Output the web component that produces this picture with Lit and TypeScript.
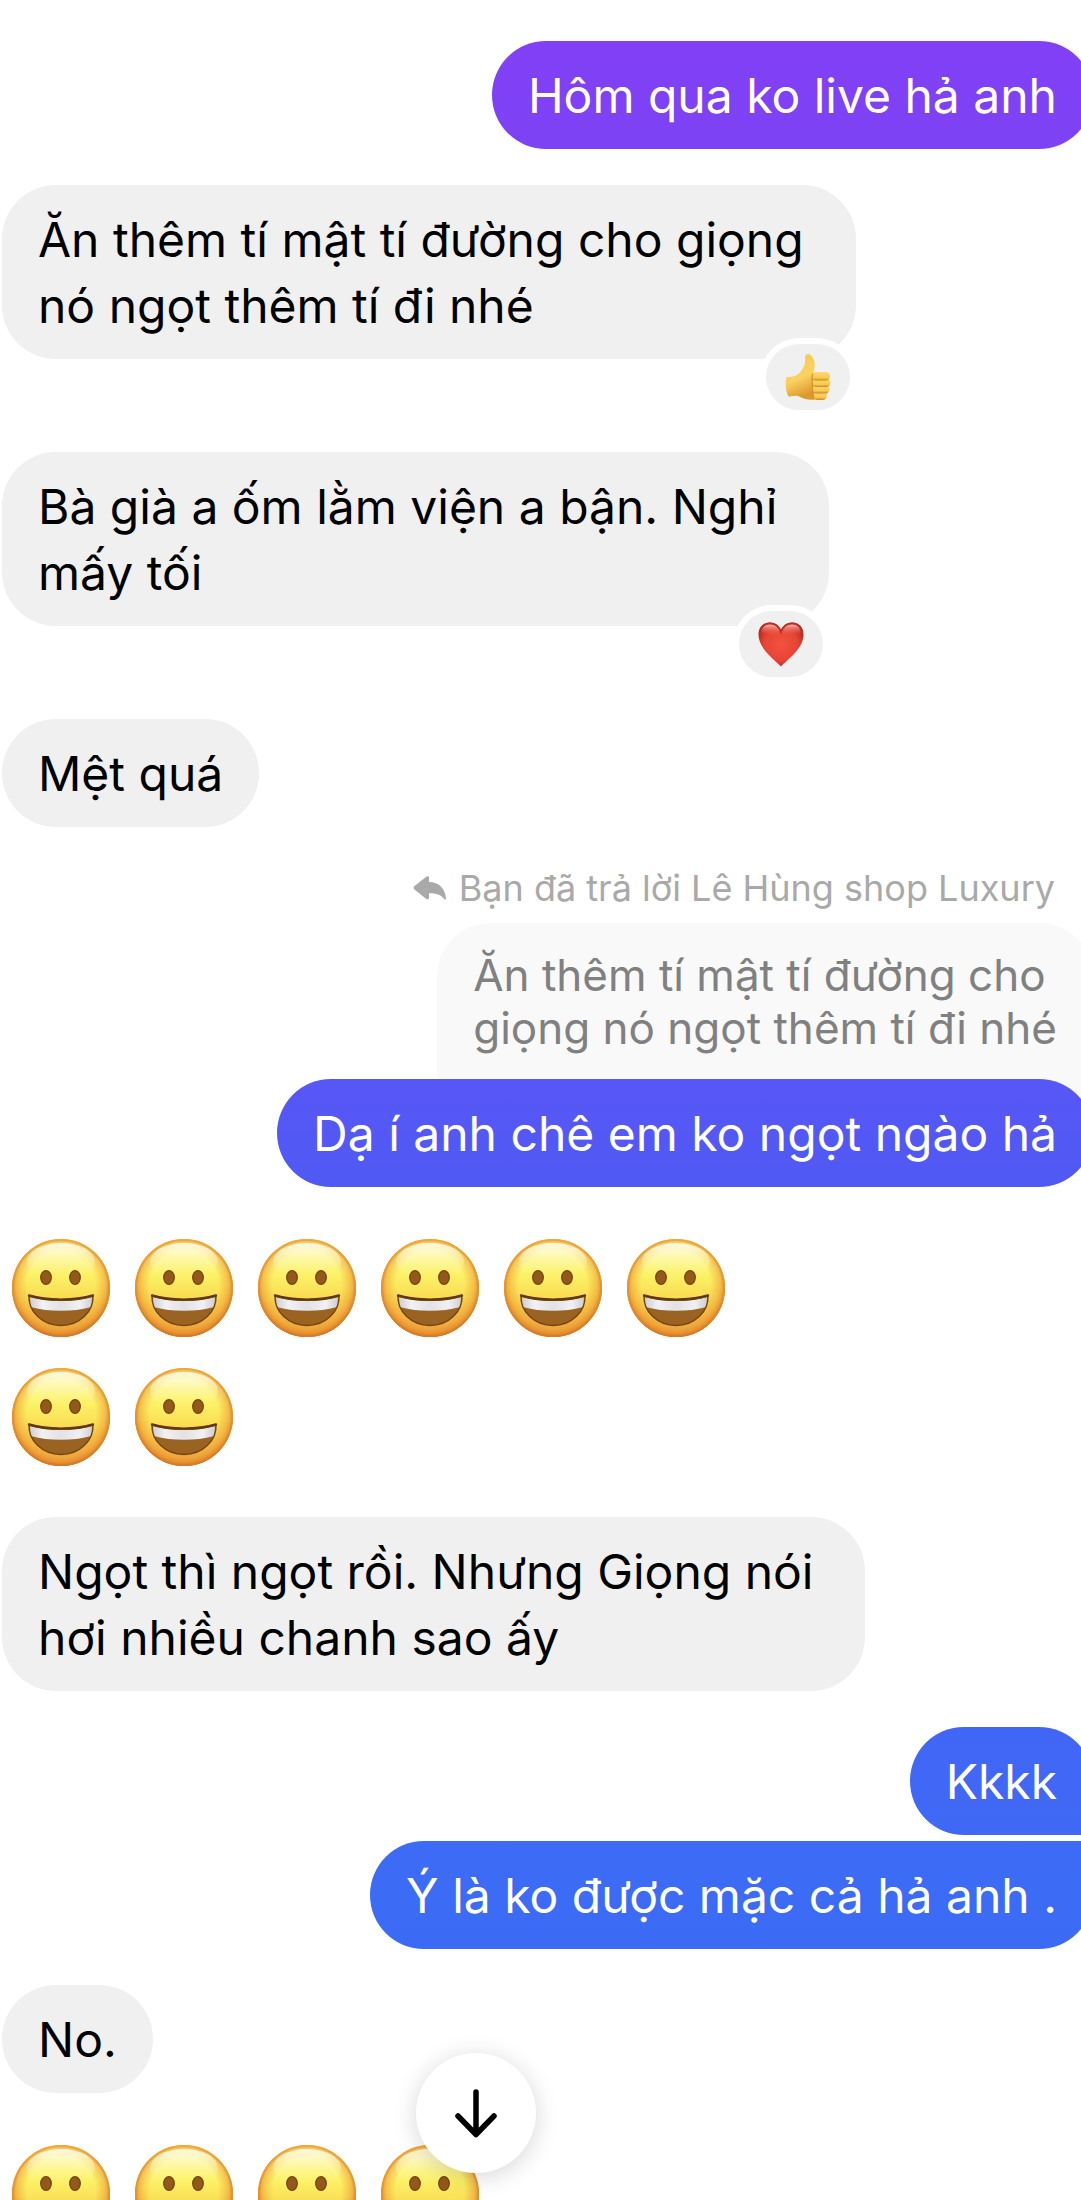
import { LitElement, html, css, svg, nothing } from "lit";
import { customElement, property } from "lit/decorators.js";
import { classMap } from "lit/directives/class-map.js";

type Reaction = "like" | "love";

interface Message {
  kind: "text" | "stickers";
  from: "me" | "them";
  text?: string;
  tone?: "violet" | "indigo" | "blue" | "azure";
  reaction?: Reaction;
  replyTo?: { label: string; quote: string };
  count?: number;
  joins?: "next" | "previous";
}

const MESSAGES: Message[] = [
  { kind: "text", from: "me", tone: "violet", text: "Hôm qua ko live hả anh" },
  { kind: "text", from: "them", text: "Ăn thêm tí mật tí đường cho giọng\nnó ngọt thêm tí đi nhé", reaction: "like" },
  { kind: "text", from: "them", text: "Bà già a ốm lằm viện a bận. Nghỉ\nmấy tối", reaction: "love" },
  { kind: "text", from: "them", text: "Mệt quá" },
  {
    kind: "text",
    from: "me",
    tone: "indigo",
    text: "Dạ í anh chê em ko ngọt ngào hả",
    replyTo: {
      label: "Bạn đã trả lời Lê Hùng shop Luxury",
      quote: "Ăn thêm tí mật tí đường cho\ngiọng nó ngọt thêm tí đi nhé",
    },
  },
  { kind: "stickers", from: "them", count: 8 },
  { kind: "text", from: "them", text: "Ngọt thì ngọt rồi. Nhưng Giọng nói\nhơi nhiều chanh sao ấy" },
  { kind: "text", from: "me", tone: "blue", text: "Kkkk", joins: "next" },
  { kind: "text", from: "me", tone: "azure", text: "Ý là ko được mặc cả hả anh .", joins: "previous" },
  { kind: "text", from: "them", text: "No." },
  { kind: "stickers", from: "them", count: 4 },
];

@customElement("grin-face")
export class GrinFace extends LitElement {
  static styles = css`
    :host { display: block; width: 98px; height: 98px; }
    svg { display: block; width: 100%; height: 100%; }
  `;
  render() {
    return html`<svg viewBox="0 0 98 98" role="img" aria-label="😀">
      <defs>
        <linearGradient id="skin" x1="0" y1="0" x2="0" y2="1">
          <stop offset="0" stop-color="#fbe96e" />
          <stop offset="0.12" stop-color="#fdf8a8" />
          <stop offset="0.36" stop-color="#fcf266" />
          <stop offset="0.62" stop-color="#f9da52" />
          <stop offset="1" stop-color="#eda63a" />
        </linearGradient>
        <radialGradient id="rim" cx="0.5" cy="0.47" r="0.53">
          <stop offset="0.66" stop-color="#ef9b33" stop-opacity="0" />
          <stop offset="0.84" stop-color="#ee9a34" stop-opacity="0.5" />
          <stop offset="0.94" stop-color="#e48a2e" stop-opacity="0.9" />
          <stop offset="1" stop-color="#cf7226" />
        </radialGradient>
        <linearGradient id="edge" x1="0" y1="0" x2="0" y2="1">
          <stop offset="0" stop-color="#eea93a" />
          <stop offset="1" stop-color="#d57c2a" />
        </linearGradient>
        <linearGradient id="glow" x1="0" y1="0" x2="0" y2="1">
          <stop offset="0" stop-color="#fffef0" stop-opacity="0.9" />
          <stop offset="1" stop-color="#fdf26a" stop-opacity="0" />
        </linearGradient>
        <linearGradient id="teeth" x1="0" y1="0" x2="1" y2="0">
          <stop offset="0" stop-color="#cfcfd3" />
          <stop offset="0.2" stop-color="#f1f1f4" />
          <stop offset="0.5" stop-color="#e2e2e6" />
          <stop offset="0.8" stop-color="#f1f1f4" />
          <stop offset="1" stop-color="#cfcfd3" />
        </linearGradient>
      </defs>
      <circle cx="49" cy="49" r="49" fill="url(#skin)" />
      <circle cx="49" cy="49" r="49" fill="url(#rim)" />
      <circle cx="49" cy="49" r="48" fill="none" stroke="url(#edge)" stroke-width="2" />
      <ellipse cx="49" cy="23" rx="34" ry="19" fill="url(#glow)" />
      <ellipse cx="34" cy="38.500" rx="5.300" ry="6.800" fill="#93591b" stroke="#75420e" stroke-width="1.200" />
      <ellipse cx="63" cy="38.500" rx="5.300" ry="6.800" fill="#93591b" stroke="#75420e" stroke-width="1.200" />
      <path d="M17 56.500C35 62 63 62 81 56.500C82 72 68 86.500 49 86.500C30 86.500 16 72 17 56.500Z" fill="#9a6322" stroke="#744511" stroke-width="1.400" stroke-linejoin="round" />
      <path d="M18 58C36 63.200 62 63.200 80 58C80 62 79.400 65 78.200 68.200C62 73 36 73 19.800 68.200C18.600 65 18 62 18 58Z" fill="url(#teeth)" />
      <path d="M17 56.500C35 62 63 62 81 56.500" fill="none" stroke="#63380b" stroke-width="2.400" stroke-linecap="round" />
    </svg>`;
  }
}

@customElement("reaction-badge")
export class ReactionBadge extends LitElement {
  @property() kind: Reaction = "like";

  static styles = css`
    :host { display: block; }
    .badge {
      display: flex;
      align-items: center;
      justify-content: center;
      width: 84px;
      height: 66px;
      padding: 0;
      border: 0;
      border-radius: 33px;
      background: #f0f0f0;
      box-shadow: 0 0 0 6px #fff;
    }
    svg { display: block; width: 48px; height: 48px; }
  `;

  private thumb() {
    return svg`
      <defs>
        <linearGradient id="hand" x1="0" y1="0" x2="0.300" y2="1">
          <stop offset="0" stop-color="#f5c84c" />
          <stop offset="0.600" stop-color="#fbd262" />
          <stop offset="1" stop-color="#dc9a2c" />
        </linearGradient>
        <linearGradient id="finger" x1="0" y1="0" x2="0" y2="1">
          <stop offset="0" stop-color="#fddb6c" />
          <stop offset="0.700" stop-color="#f8c94f" />
          <stop offset="1" stop-color="#c98526" />
        </linearGradient>
      </defs>
      <path d="M2.500 24C7 24.500 13 23 16 19.500C19 16 22 11 21 5C20.500 0.500 25.500-0.500 28 3.500C31.500 8 31.500 14 29 20L33 24L31 46.500C25 47.500 19 45.500 14 43C10 42 7 43.500 4.500 43.500C1.500 39 1 29 2.500 24Z" fill="url(#hand)" />
      <rect x="29" y="38" width="14" height="9" rx="4.500" fill="url(#finger)" />
      <rect x="28" y="32" width="17.500" height="8.500" rx="4.200" fill="url(#finger)" />
      <rect x="28" y="25.500" width="18.500" height="8.500" rx="4.200" fill="url(#finger)" />
      <rect x="27.500" y="19" width="18.500" height="8.500" rx="4.200" fill="url(#finger)" />
      <path d="M29 20.500C27 24 28.500 28 28.500 32S28 39 30 45" fill="none" stroke="#c98526" stroke-width="1.300" stroke-opacity="0.750" />`;
  }

  private heart() {
    return svg`
      <defs>
        <radialGradient id="heart" cx="0.500" cy="0.500" r="0.600">
          <stop offset="0" stop-color="#f4523f" />
          <stop offset="0.600" stop-color="#e64535" />
          <stop offset="1" stop-color="#b1241d" />
        </radialGradient>
        <linearGradient id="shine" x1="0" y1="0" x2="0" y2="1">
          <stop offset="0" stop-color="#fbb7ac" />
          <stop offset="1" stop-color="#f4523f" stop-opacity="0" />
        </linearGradient>
      </defs>
      <path d="M24 46.500C18 40 1.500 29 1.500 14.500C1.500 6.500 7 2.500 13 2.500C18 2.500 22 5.500 24 10C26 5.500 30 2.500 35 2.500C41 2.500 46.500 6.500 46.500 14.500C46.500 29 30 40 24 46.500Z" fill="url(#heart)" />
      <path d="M24 12.500C22 7.500 18 4.300 13 4.300C8 4.300 4.500 7.500 4.200 12.500C12 16.500 36 16.500 43.800 12.500C43.500 7.500 40 4.300 35 4.300C30 4.300 26 7.500 24 12.500Z" fill="url(#shine)" />
      <path d="M3.300 18C1.500 9 6 3.400 13 3.400C18 3.400 22 6.500 24 12C26 6.500 30 3.400 35 3.400C42 3.400 46.500 9 44.700 18" fill="none" stroke="#b92e26" stroke-width="1.800" />`;
  }

  render() {
    const like = this.kind === "like";
    return html`<button class="badge" type="button" aria-label=${like ? "👍" : "❤️"}>
      <svg viewBox="0 0 48 48" aria-hidden="true">${like ? this.thumb() : this.heart()}</svg>
    </button>`;
  }
}

@customElement("chat-message")
export class ChatMessage extends LitElement {
  @property({ attribute: false }) message!: Message;

  static styles = css`
    :host { display: block; }
    .row { display: flex; flex-direction: column; align-items: flex-start; }
    .me { align-items: flex-end; }
    .bubble {
      position: relative;
      box-sizing: border-box;
      padding: 22px 36px 20px;
      border-radius: 54px;
      background: #f0f0f0;
      color: #000;
      font-size: 48px;
      line-height: 66px;
      white-space: pre-line;
    }
    .wrapped { padding-right: 52px; }
    .reacted { margin-bottom: 57px; }
    .me .bubble { color: #fff; }
    .me .violet { background: linear-gradient(#8240f6, #7d42f4); }
    .me .indigo { background: linear-gradient(#5757f6, #5059f3); }
    .me .blue { background: linear-gradient(#4166f5, #3f69f5); }
    .me .azure { background: linear-gradient(#3d6bf5, #3b6bf5); }
    .joins-next { border-bottom-right-radius: 12px; }
    .joins-previous { border-top-right-radius: 12px; }
    .reaction { position: absolute; right: 6px; bottom: -51px; }
    .reply-label {
      display: flex;
      align-items: center;
      gap: 12px;
      padding-right: 38px;
      color: #a9a9a9;
      font-size: 36px;
      line-height: 50px;
    }
    .reply-label svg { width: 34px; height: 24px; }
    .quote {
      margin: 10px 0 -54px;
      padding: 26px 36px 78px;
      border-radius: 54px 54px 0 0;
      background: #f9f9f9;
      color: #808080;
      font-size: 44px;
      line-height: 53px;
      white-space: pre-line;
    }
    .stickers {
      display: flex;
      flex-wrap: wrap;
      gap: 31px 25px;
      max-width: 720px;
      padding: 26px 10px;
    }
  `;

  private renderReply() {
    const reply = this.message.replyTo;
    if (!reply) return nothing;
    return html`
      <div class="reply-label">
        <svg viewBox="0 0 34 24" fill="currentColor" aria-hidden="true">
          <path d="M16 1.600V6C26 6.300 32 12 33 22.500C33 23.800 31.800 23.900 31.200 22.900C28 18.500 23 17.200 16 17.200V21.400C16 23.300 14.500 23.900 13 22.800L1.500 13.600C0.300 12.500 0.300 11.200 1.500 10.100L13 0.900C14.500-0.300 16 0 16 1.600Z" />
        </svg>
        <span>${reply.label}</span>
      </div>
      <div class="quote">${reply.quote}</div>
    `;
  }

  render() {
    const m = this.message;
    if (m.kind === "stickers") {
      return html`<div class="stickers">
        ${Array.from({ length: m.count ?? 0 }, () => html`<grin-face></grin-face>`)}
      </div>`;
    }
    const bubble = {
      bubble: true,
      wrapped: !!m.text?.includes("\n"),
      reacted: !!m.reaction,
      [m.tone ?? "plain"]: true,
      "joins-next": m.joins === "next",
      "joins-previous": m.joins === "previous",
    };
    return html`<div class=${classMap({ row: true, me: m.from === "me" })}>
      ${this.renderReply()}
      <div class=${classMap(bubble)}>${m.text}${m.reaction
        ? html`<reaction-badge class="reaction" .kind=${m.reaction}></reaction-badge>`
        : nothing}</div>
    </div>`;
  }
}

@customElement("app-root")
export class AppRoot extends LitElement {
  static styles = css`
    :host {
      display: block;
      position: relative;
      height: 100vh;
      overflow: hidden;
      background: #fff;
      font-family: Inter, "Liberation Sans", sans-serif;
    }
    .thread {
      display: flex;
      flex-direction: column;
      gap: 36px;
      margin: 0 -12px 0 0;
      padding: 41px 0 0 2px;
    }
    .flush { margin: -10px 0 -11px; }
    .tight { margin-top: -30px; }
    .to-latest {
      position: absolute;
      bottom: 27px;
      left: 44%;
      display: flex;
      align-items: center;
      justify-content: center;
      width: 120px;
      height: 120px;
      margin-left: -60px;
      padding: 0;
      border: 0;
      border-radius: 50%;
      background: #fff;
      box-shadow: 0 4px 24px rgba(0, 0, 0, 0.16);
    }
    .to-latest svg { width: 48px; height: 54px; }
  `;

  render() {
    return html`
      <main class="thread">
        ${MESSAGES.map(
          (m) => html`<chat-message
            class=${classMap({
              flush: m.kind === "stickers",
              tight: m.joins === "previous",
            })}
            .message=${m}
          ></chat-message>`,
        )}
      </main>
      <button class="to-latest" type="button" aria-label="↓">
        <svg viewBox="0 0 48 54" fill="none" stroke="#000" stroke-width="5.500" stroke-linecap="round" stroke-linejoin="round" aria-hidden="true">
          <path d="M24 6V48M6 30L24 48.500L42 30" />
        </svg>
      </button>
    `;
  }
}
